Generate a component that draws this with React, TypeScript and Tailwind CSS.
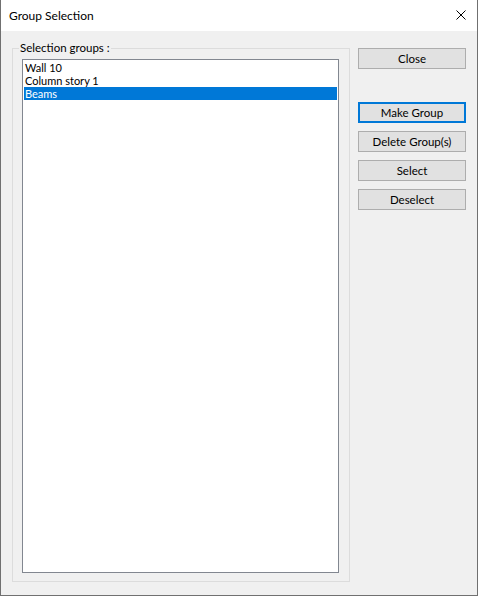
import React from 'react';

const font = { fontFamily: 'Lato, "Noto Sans", "Liberation Sans", sans-serif' };

interface BtnProps {
  label: string;
  focused?: boolean;
}

const DlgButton: React.FC<BtnProps> = ({ label, focused }) => {
  return (
    <button
      className={
        focused
          ? 'w-[108px] h-[21px] bg-[#e1e1e1] border-2 border-[#0078d7] text-[11.5px] leading-[15px] text-black'
          : 'w-[108px] h-[21px] bg-[#e1e1e1] border border-[#adadad] text-[11.5px] leading-[15px] text-black'
      }
    >
      {label}
    </button>
  );
};

const items = ['Wall 10', 'Column story 1', 'Beams'];

export default function App() {
  return (
    <div
      className="w-[478px] h-[596px] flex flex-col border-l border-r border-b border-[#707070] bg-[#f0f0f0] text-black"
      style={font}
    >
      {/* title bar */}
      <div className="h-[31px] bg-white flex items-center justify-between pl-[8px] pr-[10px]">
        <span className="text-[12px] leading-[16px] mt-[1px]">Group Selection</span>
        <svg width="10" height="10" viewBox="0 0 10 10" className="mr-[1px] mb-[1px]">
          <path d="M0.5 0.5 L9.5 9.5 M9.5 0.5 L0.5 9.5" stroke="#000" strokeWidth="1" />
        </svg>
      </div>

      <div className="flex-1 flex pl-[11px] pr-[10px]">
        {/* group box */}
        <div className="relative mt-[17px] w-[338px] h-[534px] border border-[#dcdcdc] pt-[10px] pl-[9px]">
          <span className="absolute top-[-9px] left-[6px] bg-[#f0f0f0] px-[1px] text-[11.5px] leading-[16px]">
            Selection groups :
          </span>
          <div className="w-[317px] h-[514px] bg-white border border-[#828790] pt-[1px] px-[1px]">
            {items.map((it, i) => (
              <div
                key={it}
                className={
                  i === 2
                    ? 'h-[13px] bg-[#0078d7] text-white text-[11px] leading-[13px] pl-[1px]'
                    : 'h-[13px] text-[11px] leading-[13px] pl-[1px]'
                }
              >
                {it}
              </div>
            ))}
          </div>
        </div>

        {/* buttons */}
        <div className="ml-[8px] pt-[17px] flex flex-col">
          <DlgButton label="Close" />
          <div className="mt-[33px] flex flex-col gap-[8px]">
            <DlgButton label="Make Group" focused />
            <DlgButton label="Delete Group(s)" />
            <DlgButton label="Select" />
            <DlgButton label="Deselect" />
          </div>
        </div>
      </div>
    </div>
  );
}
